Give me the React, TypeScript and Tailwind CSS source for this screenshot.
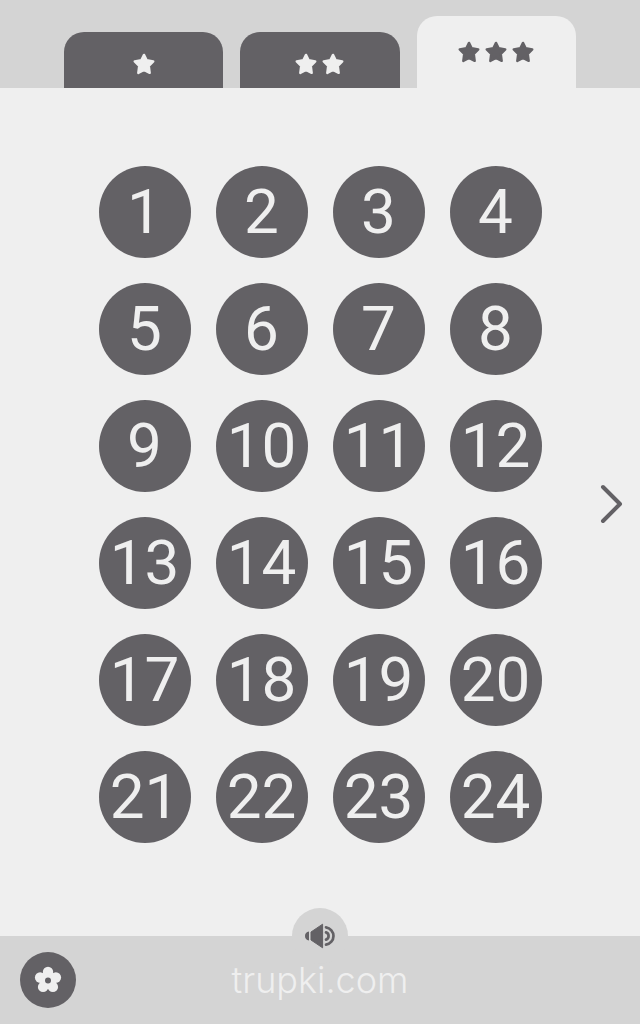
import { useState } from "react";

function Star() {
  return (
    <svg viewBox="0 0 22 22" className="size-[22px]" aria-hidden="true">
      <path
        d="M11 1.9L13.7 7.3L20.3 8.4L15.8 13L16.7 19.9L11 17L5.3 19.9L6.2 13L1.7 8.4L8.3 7.3Z"
        fill="currentColor"
        stroke="currentColor"
        strokeWidth="2.4"
        strokeLinejoin="round"
      />
    </svg>
  );
}

function Flower() {
  return (
    <svg viewBox="0 0 28 28" className="size-7" aria-hidden="true">
      <g fill="#efefef">
        <circle cx="14" cy="5.9" r="5.2" />
        <circle cx="21.9" cy="11.5" r="5.2" />
        <circle cx="18.9" cy="20.9" r="5.2" />
        <circle cx="9.1" cy="20.9" r="5.2" />
        <circle cx="6.1" cy="11.5" r="5.2" />
        <circle cx="14" cy="14" r="8.8" />
      </g>
      <circle cx="14" cy="14.4" r="3" fill="#636165" />
    </svg>
  );
}

function Speaker() {
  return (
    <svg viewBox="0 0 32 26" className="h-[26px] w-8" aria-hidden="true">
      <path d="M5 8.6V17.4C2.4 17.2 1 15.4 1 13S2.4 8.8 5 8.6Z" fill="#636165" />
      <path
        d="M7 9L18.6 1.2V24.8L7 17Z"
        fill="#636165"
        stroke="#636165"
        strokeWidth="1"
        strokeLinejoin="round"
      />
      <g fill="none" stroke="#636165" strokeWidth="2.7" strokeLinecap="round">
        <path d="M22 9.4A3.8 3.8 0 0 1 22 16.6" />
        <path d="M22 4.3A8.8 8.8 0 0 1 22 21.7" />
      </g>
    </svg>
  );
}

const difficulties = [1, 2, 3];
const levels = Array.from({ length: 24 }, (_, i) => i + 1);

export default function App() {
  const [selected, setSelected] = useState(3);

  return (
    <div className="flex min-h-screen flex-col bg-[#efefef] font-['Roboto',sans-serif] text-[#636165]">
      <header className="flex h-[88px] justify-center bg-[#d4d4d4] px-4">
        <div role="tablist" aria-label="Difficulty" className="flex w-full max-w-[512px] items-end gap-[17px]">
          {difficulties.map((n) => (
            <button
              key={n}
              type="button"
              role="tab"
              aria-selected={selected === n}
              aria-label={`Difficulty ${n}`}
              onClick={() => setSelected(n)}
              className={
                selected === n
                  ? "flex h-[72px] flex-1 items-center justify-center gap-[5px] rounded-t-[20px] bg-[#efefef] text-[#636165]"
                  : "flex h-14 flex-1 items-center justify-center gap-[5px] rounded-t-[20px] bg-[#636165] pt-2 text-[#efefef]"
              }
            >
              {Array.from({ length: n }, (_, i) => (
                <Star key={i} />
              ))}
            </button>
          ))}
        </div>
      </header>

      <main className="grid flex-1 grid-cols-[1fr_auto_1fr] items-center pb-4">
        <div className="col-start-2 grid grid-cols-4 gap-[25px]">
          {levels.map((n) => (
            <button
              key={n}
              type="button"
              className="flex size-[92px] items-center justify-center rounded-full bg-[#636165] text-[62px] leading-none text-[#efefef]"
            >
              {n}
            </button>
          ))}
        </div>
        <button type="button" aria-label="Next page" className="mr-4 justify-self-end">
          <svg viewBox="0 0 24 40" className="h-10 w-6" fill="none" aria-hidden="true">
            <path d="M3 3L20 20L3 37" stroke="#636165" strokeWidth="4" strokeLinecap="round" strokeLinejoin="round" />
          </svg>
        </button>
      </main>

      <footer className="relative grid h-[88px] grid-cols-[1fr_auto_1fr] items-center bg-[#d4d4d4] px-5">
        <button
          type="button"
          aria-label="Sound"
          className="absolute -top-7 left-1/2 flex size-14 -translate-x-1/2 items-center justify-center rounded-full bg-[#d4d4d4]"
        >
          <Speaker />
        </button>
        <button
          type="button"
          aria-label="Settings"
          className="flex size-14 items-center justify-center rounded-full bg-[#636165]"
        >
          <Flower />
        </button>
        <a href="#home" className="font-['Inter',sans-serif] text-[36px] leading-none font-light text-[#efefef]">
          trupki.com
        </a>
      </footer>
    </div>
  );
}
